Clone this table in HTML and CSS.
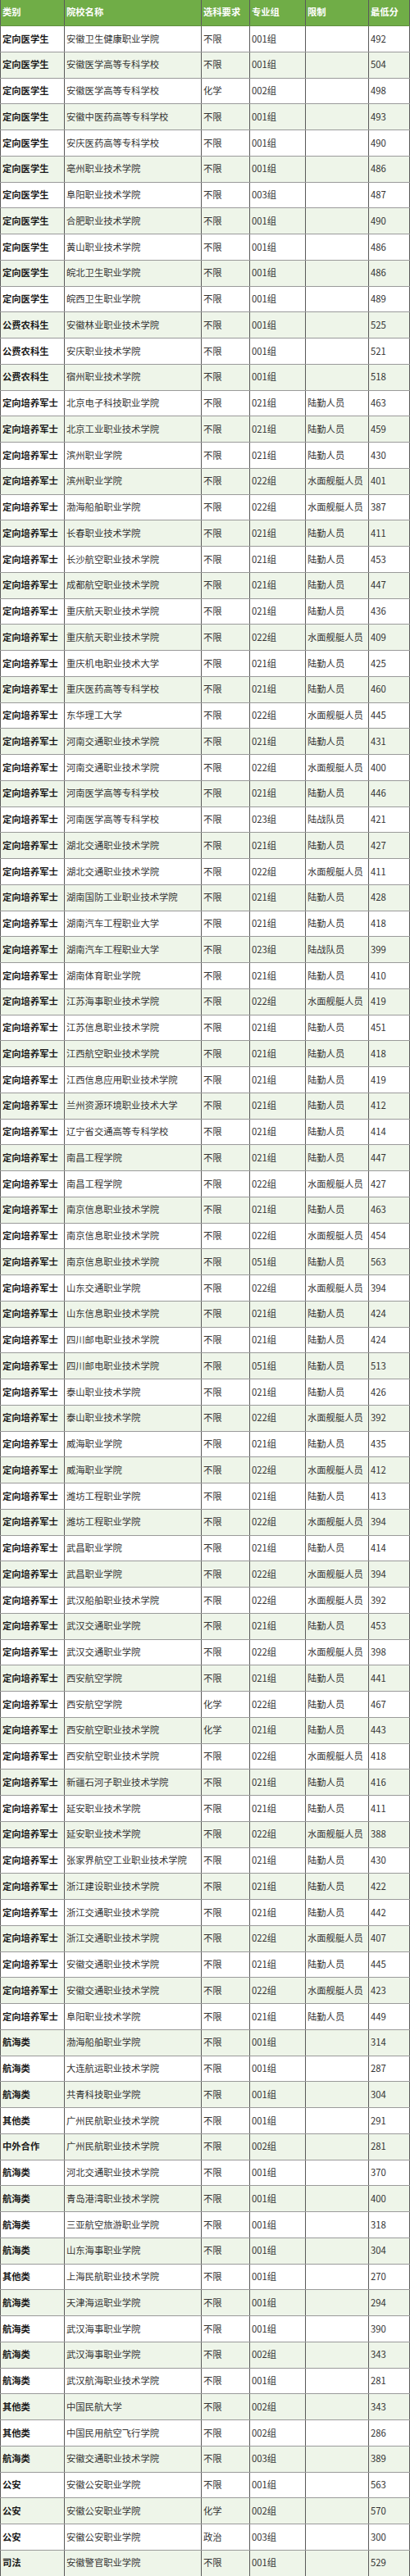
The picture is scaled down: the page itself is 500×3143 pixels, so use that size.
FILE: index.html
```html
<!DOCTYPE html>
<html lang="zh-CN">
<head>
<meta charset="utf-8">
<title>录取最低分</title>
<link rel="stylesheet" href="styles.css">
</head>
<body>
<div class="sheet">
  <div class="row head"><span class="c">类别</span><span class="c">院校名称</span><span class="c">选科要求</span><span class="c">专业组</span><span class="c">限制</span><span class="c">最低分</span></div>
  <div class="rows">
    <div class="row"><span class="c cat">定向医学生</span><span class="c">安徽卫生健康职业学院</span><span class="c">不限</span><span class="c">001组</span><span class="c"></span><span class="c">492</span></div>
    <div class="row"><span class="c cat">定向医学生</span><span class="c">安徽医学高等专科学校</span><span class="c">不限</span><span class="c">001组</span><span class="c"></span><span class="c">504</span></div>
    <div class="row"><span class="c cat">定向医学生</span><span class="c">安徽医学高等专科学校</span><span class="c">化学</span><span class="c">002组</span><span class="c"></span><span class="c">498</span></div>
    <div class="row"><span class="c cat">定向医学生</span><span class="c">安徽中医药高等专科学校</span><span class="c">不限</span><span class="c">001组</span><span class="c"></span><span class="c">493</span></div>
    <div class="row"><span class="c cat">定向医学生</span><span class="c">安庆医药高等专科学校</span><span class="c">不限</span><span class="c">001组</span><span class="c"></span><span class="c">490</span></div>
    <div class="row"><span class="c cat">定向医学生</span><span class="c">亳州职业技术学院</span><span class="c">不限</span><span class="c">001组</span><span class="c"></span><span class="c">486</span></div>
    <div class="row"><span class="c cat">定向医学生</span><span class="c">阜阳职业技术学院</span><span class="c">不限</span><span class="c">003组</span><span class="c"></span><span class="c">487</span></div>
    <div class="row"><span class="c cat">定向医学生</span><span class="c">合肥职业技术学院</span><span class="c">不限</span><span class="c">001组</span><span class="c"></span><span class="c">490</span></div>
    <div class="row"><span class="c cat">定向医学生</span><span class="c">黄山职业技术学院</span><span class="c">不限</span><span class="c">001组</span><span class="c"></span><span class="c">486</span></div>
    <div class="row"><span class="c cat">定向医学生</span><span class="c">皖北卫生职业学院</span><span class="c">不限</span><span class="c">001组</span><span class="c"></span><span class="c">486</span></div>
    <div class="row"><span class="c cat">定向医学生</span><span class="c">皖西卫生职业学院</span><span class="c">不限</span><span class="c">001组</span><span class="c"></span><span class="c">489</span></div>
    <div class="row"><span class="c cat">公费农科生</span><span class="c">安徽林业职业技术学院</span><span class="c">不限</span><span class="c">001组</span><span class="c"></span><span class="c">525</span></div>
    <div class="row"><span class="c cat">公费农科生</span><span class="c">安庆职业技术学院</span><span class="c">不限</span><span class="c">001组</span><span class="c"></span><span class="c">521</span></div>
    <div class="row"><span class="c cat">公费农科生</span><span class="c">宿州职业技术学院</span><span class="c">不限</span><span class="c">001组</span><span class="c"></span><span class="c">518</span></div>
    <div class="row"><span class="c cat">定向培养军士</span><span class="c">北京电子科技职业学院</span><span class="c">不限</span><span class="c">021组</span><span class="c">陆勤人员</span><span class="c">463</span></div>
    <div class="row"><span class="c cat">定向培养军士</span><span class="c">北京工业职业技术学院</span><span class="c">不限</span><span class="c">021组</span><span class="c">陆勤人员</span><span class="c">459</span></div>
    <div class="row"><span class="c cat">定向培养军士</span><span class="c">滨州职业学院</span><span class="c">不限</span><span class="c">021组</span><span class="c">陆勤人员</span><span class="c">430</span></div>
    <div class="row"><span class="c cat">定向培养军士</span><span class="c">滨州职业学院</span><span class="c">不限</span><span class="c">022组</span><span class="c">水面舰艇人员</span><span class="c">401</span></div>
    <div class="row"><span class="c cat">定向培养军士</span><span class="c">渤海船舶职业学院</span><span class="c">不限</span><span class="c">022组</span><span class="c">水面舰艇人员</span><span class="c">387</span></div>
    <div class="row"><span class="c cat">定向培养军士</span><span class="c">长春职业技术学院</span><span class="c">不限</span><span class="c">021组</span><span class="c">陆勤人员</span><span class="c">411</span></div>
    <div class="row"><span class="c cat">定向培养军士</span><span class="c">长沙航空职业技术学院</span><span class="c">不限</span><span class="c">021组</span><span class="c">陆勤人员</span><span class="c">453</span></div>
    <div class="row"><span class="c cat">定向培养军士</span><span class="c">成都航空职业技术学院</span><span class="c">不限</span><span class="c">021组</span><span class="c">陆勤人员</span><span class="c">447</span></div>
    <div class="row"><span class="c cat">定向培养军士</span><span class="c">重庆航天职业技术学院</span><span class="c">不限</span><span class="c">021组</span><span class="c">陆勤人员</span><span class="c">436</span></div>
    <div class="row"><span class="c cat">定向培养军士</span><span class="c">重庆航天职业技术学院</span><span class="c">不限</span><span class="c">022组</span><span class="c">水面舰艇人员</span><span class="c">409</span></div>
    <div class="row"><span class="c cat">定向培养军士</span><span class="c">重庆机电职业技术大学</span><span class="c">不限</span><span class="c">021组</span><span class="c">陆勤人员</span><span class="c">425</span></div>
    <div class="row"><span class="c cat">定向培养军士</span><span class="c">重庆医药高等专科学校</span><span class="c">不限</span><span class="c">021组</span><span class="c">陆勤人员</span><span class="c">460</span></div>
    <div class="row"><span class="c cat">定向培养军士</span><span class="c">东华理工大学</span><span class="c">不限</span><span class="c">022组</span><span class="c">水面舰艇人员</span><span class="c">445</span></div>
    <div class="row"><span class="c cat">定向培养军士</span><span class="c">河南交通职业技术学院</span><span class="c">不限</span><span class="c">021组</span><span class="c">陆勤人员</span><span class="c">431</span></div>
    <div class="row"><span class="c cat">定向培养军士</span><span class="c">河南交通职业技术学院</span><span class="c">不限</span><span class="c">022组</span><span class="c">水面舰艇人员</span><span class="c">400</span></div>
    <div class="row"><span class="c cat">定向培养军士</span><span class="c">河南医学高等专科学校</span><span class="c">不限</span><span class="c">021组</span><span class="c">陆勤人员</span><span class="c">446</span></div>
    <div class="row"><span class="c cat">定向培养军士</span><span class="c">河南医学高等专科学校</span><span class="c">不限</span><span class="c">023组</span><span class="c">陆战队员</span><span class="c">421</span></div>
    <div class="row"><span class="c cat">定向培养军士</span><span class="c">湖北交通职业技术学院</span><span class="c">不限</span><span class="c">021组</span><span class="c">陆勤人员</span><span class="c">427</span></div>
    <div class="row"><span class="c cat">定向培养军士</span><span class="c">湖北交通职业技术学院</span><span class="c">不限</span><span class="c">022组</span><span class="c">水面舰艇人员</span><span class="c">411</span></div>
    <div class="row"><span class="c cat">定向培养军士</span><span class="c">湖南国防工业职业技术学院</span><span class="c">不限</span><span class="c">021组</span><span class="c">陆勤人员</span><span class="c">428</span></div>
    <div class="row"><span class="c cat">定向培养军士</span><span class="c">湖南汽车工程职业大学</span><span class="c">不限</span><span class="c">021组</span><span class="c">陆勤人员</span><span class="c">418</span></div>
    <div class="row"><span class="c cat">定向培养军士</span><span class="c">湖南汽车工程职业大学</span><span class="c">不限</span><span class="c">023组</span><span class="c">陆战队员</span><span class="c">399</span></div>
    <div class="row"><span class="c cat">定向培养军士</span><span class="c">湖南体育职业学院</span><span class="c">不限</span><span class="c">021组</span><span class="c">陆勤人员</span><span class="c">410</span></div>
    <div class="row"><span class="c cat">定向培养军士</span><span class="c">江苏海事职业技术学院</span><span class="c">不限</span><span class="c">022组</span><span class="c">水面舰艇人员</span><span class="c">419</span></div>
    <div class="row"><span class="c cat">定向培养军士</span><span class="c">江苏信息职业技术学院</span><span class="c">不限</span><span class="c">021组</span><span class="c">陆勤人员</span><span class="c">451</span></div>
    <div class="row"><span class="c cat">定向培养军士</span><span class="c">江西航空职业技术学院</span><span class="c">不限</span><span class="c">021组</span><span class="c">陆勤人员</span><span class="c">418</span></div>
    <div class="row"><span class="c cat">定向培养军士</span><span class="c">江西信息应用职业技术学院</span><span class="c">不限</span><span class="c">021组</span><span class="c">陆勤人员</span><span class="c">419</span></div>
    <div class="row"><span class="c cat">定向培养军士</span><span class="c">兰州资源环境职业技术大学</span><span class="c">不限</span><span class="c">021组</span><span class="c">陆勤人员</span><span class="c">412</span></div>
    <div class="row"><span class="c cat">定向培养军士</span><span class="c">辽宁省交通高等专科学校</span><span class="c">不限</span><span class="c">021组</span><span class="c">陆勤人员</span><span class="c">414</span></div>
    <div class="row"><span class="c cat">定向培养军士</span><span class="c">南昌工程学院</span><span class="c">不限</span><span class="c">021组</span><span class="c">陆勤人员</span><span class="c">447</span></div>
    <div class="row"><span class="c cat">定向培养军士</span><span class="c">南昌工程学院</span><span class="c">不限</span><span class="c">022组</span><span class="c">水面舰艇人员</span><span class="c">427</span></div>
    <div class="row"><span class="c cat">定向培养军士</span><span class="c">南京信息职业技术学院</span><span class="c">不限</span><span class="c">021组</span><span class="c">陆勤人员</span><span class="c">463</span></div>
    <div class="row"><span class="c cat">定向培养军士</span><span class="c">南京信息职业技术学院</span><span class="c">不限</span><span class="c">022组</span><span class="c">水面舰艇人员</span><span class="c">454</span></div>
    <div class="row"><span class="c cat">定向培养军士</span><span class="c">南京信息职业技术学院</span><span class="c">不限</span><span class="c">051组</span><span class="c">陆勤人员</span><span class="c">563</span></div>
    <div class="row"><span class="c cat">定向培养军士</span><span class="c">山东交通职业学院</span><span class="c">不限</span><span class="c">022组</span><span class="c">水面舰艇人员</span><span class="c">394</span></div>
    <div class="row"><span class="c cat">定向培养军士</span><span class="c">山东信息职业技术学院</span><span class="c">不限</span><span class="c">021组</span><span class="c">陆勤人员</span><span class="c">424</span></div>
    <div class="row"><span class="c cat">定向培养军士</span><span class="c">四川邮电职业技术学院</span><span class="c">不限</span><span class="c">021组</span><span class="c">陆勤人员</span><span class="c">424</span></div>
    <div class="row"><span class="c cat">定向培养军士</span><span class="c">四川邮电职业技术学院</span><span class="c">不限</span><span class="c">051组</span><span class="c">陆勤人员</span><span class="c">513</span></div>
    <div class="row"><span class="c cat">定向培养军士</span><span class="c">泰山职业技术学院</span><span class="c">不限</span><span class="c">021组</span><span class="c">陆勤人员</span><span class="c">426</span></div>
    <div class="row"><span class="c cat">定向培养军士</span><span class="c">泰山职业技术学院</span><span class="c">不限</span><span class="c">022组</span><span class="c">水面舰艇人员</span><span class="c">392</span></div>
    <div class="row"><span class="c cat">定向培养军士</span><span class="c">威海职业学院</span><span class="c">不限</span><span class="c">021组</span><span class="c">陆勤人员</span><span class="c">435</span></div>
    <div class="row"><span class="c cat">定向培养军士</span><span class="c">威海职业学院</span><span class="c">不限</span><span class="c">022组</span><span class="c">水面舰艇人员</span><span class="c">412</span></div>
    <div class="row"><span class="c cat">定向培养军士</span><span class="c">潍坊工程职业学院</span><span class="c">不限</span><span class="c">021组</span><span class="c">陆勤人员</span><span class="c">413</span></div>
    <div class="row"><span class="c cat">定向培养军士</span><span class="c">潍坊工程职业学院</span><span class="c">不限</span><span class="c">022组</span><span class="c">水面舰艇人员</span><span class="c">394</span></div>
    <div class="row"><span class="c cat">定向培养军士</span><span class="c">武昌职业学院</span><span class="c">不限</span><span class="c">021组</span><span class="c">陆勤人员</span><span class="c">414</span></div>
    <div class="row"><span class="c cat">定向培养军士</span><span class="c">武昌职业学院</span><span class="c">不限</span><span class="c">022组</span><span class="c">水面舰艇人员</span><span class="c">394</span></div>
    <div class="row"><span class="c cat">定向培养军士</span><span class="c">武汉船舶职业技术学院</span><span class="c">不限</span><span class="c">022组</span><span class="c">水面舰艇人员</span><span class="c">392</span></div>
    <div class="row"><span class="c cat">定向培养军士</span><span class="c">武汉交通职业学院</span><span class="c">不限</span><span class="c">021组</span><span class="c">陆勤人员</span><span class="c">453</span></div>
    <div class="row"><span class="c cat">定向培养军士</span><span class="c">武汉交通职业学院</span><span class="c">不限</span><span class="c">022组</span><span class="c">水面舰艇人员</span><span class="c">398</span></div>
    <div class="row"><span class="c cat">定向培养军士</span><span class="c">西安航空学院</span><span class="c">不限</span><span class="c">021组</span><span class="c">陆勤人员</span><span class="c">441</span></div>
    <div class="row"><span class="c cat">定向培养军士</span><span class="c">西安航空学院</span><span class="c">化学</span><span class="c">022组</span><span class="c">陆勤人员</span><span class="c">467</span></div>
    <div class="row"><span class="c cat">定向培养军士</span><span class="c">西安航空职业技术学院</span><span class="c">化学</span><span class="c">021组</span><span class="c">陆勤人员</span><span class="c">443</span></div>
    <div class="row"><span class="c cat">定向培养军士</span><span class="c">西安航空职业技术学院</span><span class="c">不限</span><span class="c">022组</span><span class="c">水面舰艇人员</span><span class="c">418</span></div>
    <div class="row"><span class="c cat">定向培养军士</span><span class="c">新疆石河子职业技术学院</span><span class="c">不限</span><span class="c">021组</span><span class="c">陆勤人员</span><span class="c">416</span></div>
    <div class="row"><span class="c cat">定向培养军士</span><span class="c">延安职业技术学院</span><span class="c">不限</span><span class="c">021组</span><span class="c">陆勤人员</span><span class="c">411</span></div>
    <div class="row"><span class="c cat">定向培养军士</span><span class="c">延安职业技术学院</span><span class="c">不限</span><span class="c">022组</span><span class="c">水面舰艇人员</span><span class="c">388</span></div>
    <div class="row"><span class="c cat">定向培养军士</span><span class="c">张家界航空工业职业技术学院</span><span class="c">不限</span><span class="c">021组</span><span class="c">陆勤人员</span><span class="c">430</span></div>
    <div class="row"><span class="c cat">定向培养军士</span><span class="c">浙江建设职业技术学院</span><span class="c">不限</span><span class="c">021组</span><span class="c">陆勤人员</span><span class="c">422</span></div>
    <div class="row"><span class="c cat">定向培养军士</span><span class="c">浙江交通职业技术学院</span><span class="c">不限</span><span class="c">021组</span><span class="c">陆勤人员</span><span class="c">442</span></div>
    <div class="row"><span class="c cat">定向培养军士</span><span class="c">浙江交通职业技术学院</span><span class="c">不限</span><span class="c">022组</span><span class="c">水面舰艇人员</span><span class="c">407</span></div>
    <div class="row"><span class="c cat">定向培养军士</span><span class="c">安徽交通职业技术学院</span><span class="c">不限</span><span class="c">021组</span><span class="c">陆勤人员</span><span class="c">445</span></div>
    <div class="row"><span class="c cat">定向培养军士</span><span class="c">安徽交通职业技术学院</span><span class="c">不限</span><span class="c">022组</span><span class="c">水面舰艇人员</span><span class="c">423</span></div>
    <div class="row"><span class="c cat">定向培养军士</span><span class="c">阜阳职业技术学院</span><span class="c">不限</span><span class="c">021组</span><span class="c">陆勤人员</span><span class="c">449</span></div>
    <div class="row"><span class="c cat">航海类</span><span class="c">渤海船舶职业学院</span><span class="c">不限</span><span class="c">001组</span><span class="c"></span><span class="c">314</span></div>
    <div class="row"><span class="c cat">航海类</span><span class="c">大连航运职业技术学院</span><span class="c">不限</span><span class="c">001组</span><span class="c"></span><span class="c">287</span></div>
    <div class="row"><span class="c cat">航海类</span><span class="c">共青科技职业学院</span><span class="c">不限</span><span class="c">001组</span><span class="c"></span><span class="c">304</span></div>
    <div class="row"><span class="c cat">其他类</span><span class="c">广州民航职业技术学院</span><span class="c">不限</span><span class="c">001组</span><span class="c"></span><span class="c">291</span></div>
    <div class="row"><span class="c cat">中外合作</span><span class="c">广州民航职业技术学院</span><span class="c">不限</span><span class="c">002组</span><span class="c"></span><span class="c">281</span></div>
    <div class="row"><span class="c cat">航海类</span><span class="c">河北交通职业技术学院</span><span class="c">不限</span><span class="c">001组</span><span class="c"></span><span class="c">370</span></div>
    <div class="row"><span class="c cat">航海类</span><span class="c">青岛港湾职业技术学院</span><span class="c">不限</span><span class="c">001组</span><span class="c"></span><span class="c">400</span></div>
    <div class="row"><span class="c cat">航海类</span><span class="c">三亚航空旅游职业学院</span><span class="c">不限</span><span class="c">001组</span><span class="c"></span><span class="c">318</span></div>
    <div class="row"><span class="c cat">航海类</span><span class="c">山东海事职业学院</span><span class="c">不限</span><span class="c">001组</span><span class="c"></span><span class="c">304</span></div>
    <div class="row"><span class="c cat">其他类</span><span class="c">上海民航职业技术学院</span><span class="c">不限</span><span class="c">001组</span><span class="c"></span><span class="c">270</span></div>
    <div class="row"><span class="c cat">航海类</span><span class="c">天津海运职业学院</span><span class="c">不限</span><span class="c">001组</span><span class="c"></span><span class="c">294</span></div>
    <div class="row"><span class="c cat">航海类</span><span class="c">武汉海事职业学院</span><span class="c">不限</span><span class="c">001组</span><span class="c"></span><span class="c">390</span></div>
    <div class="row"><span class="c cat">航海类</span><span class="c">武汉海事职业学院</span><span class="c">不限</span><span class="c">002组</span><span class="c"></span><span class="c">343</span></div>
    <div class="row"><span class="c cat">航海类</span><span class="c">武汉航海职业技术学院</span><span class="c">不限</span><span class="c">001组</span><span class="c"></span><span class="c">281</span></div>
    <div class="row"><span class="c cat">其他类</span><span class="c">中国民航大学</span><span class="c">不限</span><span class="c">002组</span><span class="c"></span><span class="c">343</span></div>
    <div class="row"><span class="c cat">其他类</span><span class="c">中国民用航空飞行学院</span><span class="c">不限</span><span class="c">002组</span><span class="c"></span><span class="c">286</span></div>
    <div class="row"><span class="c cat">航海类</span><span class="c">安徽交通职业技术学院</span><span class="c">不限</span><span class="c">003组</span><span class="c"></span><span class="c">389</span></div>
    <div class="row"><span class="c cat">公安</span><span class="c">安徽公安职业学院</span><span class="c">不限</span><span class="c">001组</span><span class="c"></span><span class="c">563</span></div>
    <div class="row"><span class="c cat">公安</span><span class="c">安徽公安职业学院</span><span class="c">化学</span><span class="c">002组</span><span class="c"></span><span class="c">570</span></div>
    <div class="row"><span class="c cat">公安</span><span class="c">安徽公安职业学院</span><span class="c">政治</span><span class="c">003组</span><span class="c"></span><span class="c">300</span></div>
    <div class="row"><span class="c cat">司法</span><span class="c">安徽警官职业学院</span><span class="c">不限</span><span class="c">001组</span><span class="c"></span><span class="c">529</span></div>
  </div>
</div>
</body>
</html>
```

FILE: styles.css
```css
html, body {
  margin: 0;
  padding: 0;
  background: #ffffff;
}

.sheet {
  width: 500px;
  font-family: "Noto Sans CJK SC", "Noto Sans", sans-serif;
  font-size: 11.3px;
  color: #333333;
}

.row {
  display: grid;
  grid-template-columns: 79px 167px 59px 68px 77px 50px;
  height: 31.75px;
  box-sizing: border-box;
  border-bottom: 1px solid #9a9a9a;
  background: #ffffff;
}

.rows .row:nth-child(even) {
  background: #eef5e9;
}

.row.head {
  height: 32px;
  background: #70ad47;
  color: #ffffff;
  font-weight: 700;
  border-bottom: 1px solid #5f8f3e;
}

.c {
  display: flex;
  align-items: center;
  padding-left: 2px;
  border-right: 1px solid #5a5a5a;
  white-space: nowrap;
  overflow: hidden;
  line-height: 1;
}

.c:first-child {
  border-left: 1px solid #5a5a5a;
}

.head .c {
  padding-bottom: 1px;
}

.cat {
  font-weight: 700;
  color: #1a1a1a;
}
```
